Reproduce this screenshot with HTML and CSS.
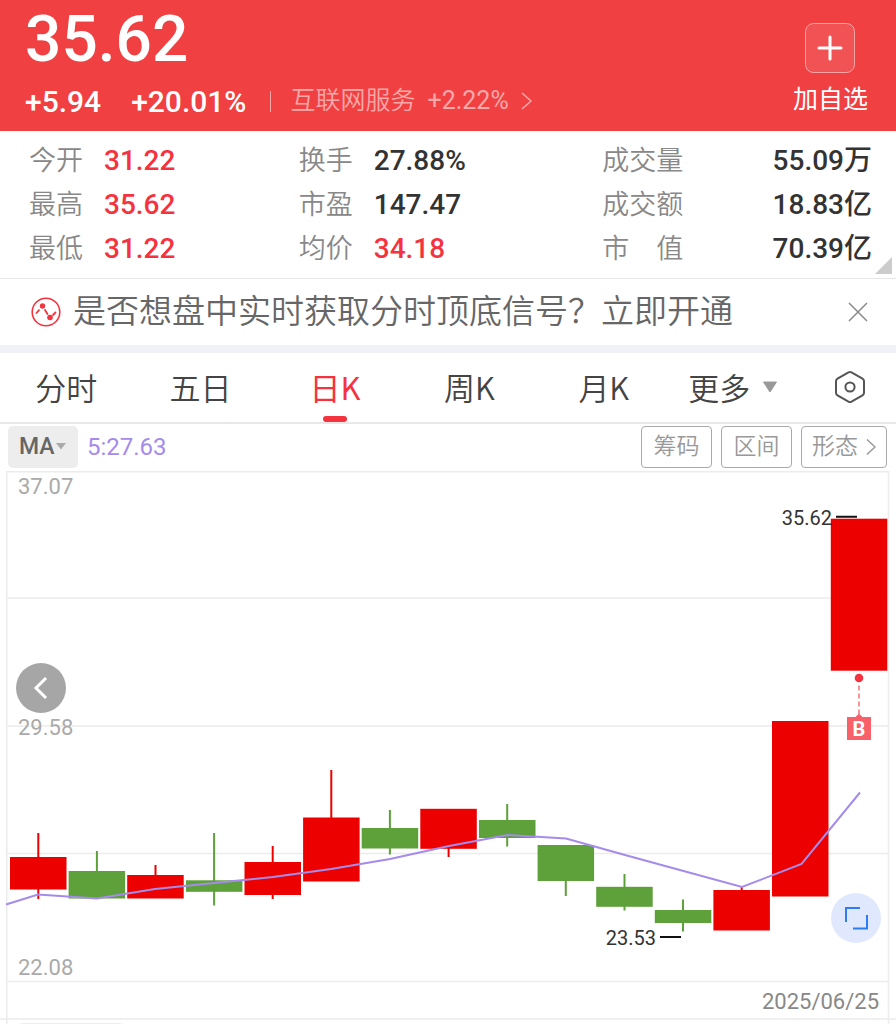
FILE: index.html
```html
<!DOCTYPE html>
<html lang="zh-CN">
<head>
    <meta charset="UTF-8">
    <meta name="viewport" content="width=device-width, initial-scale=1.0">
    <title>日K</title>
    <link rel="stylesheet" href="styles.css">
</head>
<body>
    <header class="quote">
        <div class="quote-main">
            <div class="price">35.62</div>
            <div class="quote-row">
                <span class="change">+5.94</span>
                <span class="change">+20.01%</span>
                <a class="sector" href="#">
                    <span>互联网服务</span>
                    <span class="sector-change">+2.22%</span>
                    <svg width="12" height="20" viewBox="0 0 12 20"><path d="M1 2l9 8-9 8" fill="none" stroke="currentColor" stroke-width="1.5"/></svg>
                </a>
            </div>
        </div>
        <button class="add-btn" type="button">
            <svg class="add-icon" width="50" height="50" viewBox="0 0 50 50">
                <rect x="0.5" y="0.5" width="49" height="49" rx="8" fill="#fff" fill-opacity=".1" stroke="#fff" stroke-opacity=".5"/>
                <path d="M14 25h22M25 14v22" stroke="#fff" stroke-width="3" stroke-linecap="round"/>
            </svg>
            <span>加自选</span>
        </button>
    </header>

    <section class="stats">
        <dl class="stats-col">
            <div class="stat"><dt>今开</dt><dd class="up">31.22</dd></div>
            <div class="stat"><dt>最高</dt><dd class="up">35.62</dd></div>
            <div class="stat"><dt>最低</dt><dd class="up">31.22</dd></div>
        </dl>
        <dl class="stats-col">
            <div class="stat"><dt>换手</dt><dd>27.88%</dd></div>
            <div class="stat"><dt>市盈</dt><dd>147.47</dd></div>
            <div class="stat"><dt>均价</dt><dd class="up">34.18</dd></div>
        </dl>
        <dl class="stats-col stats-last">
            <div class="stat"><dt>成交量</dt><dd>55.09万</dd></div>
            <div class="stat"><dt>成交额</dt><dd>18.83亿</dd></div>
            <div class="stat"><dt>市　值</dt><dd>70.39亿</dd></div>
        </dl>
        <span class="corner"></span>
    </section>

    <section class="notice">
        <svg width="30" height="30" viewBox="0 0 30 30" fill="none" stroke="#f5333f">
            <circle cx="15" cy="15" r="13.8" stroke-width="1.6"/>
            <path d="M5.5 16l2.5-2.800M14 13l2.500 4M22 18l2.500-2.500" stroke-width="1.8" stroke-linecap="round"/>
            <circle cx="11.500" cy="9" r="2.7" fill="#f5333f" stroke="none"/>
            <circle cx="19" cy="20.500" r="2.8" fill="#f5333f" stroke="none"/>
        </svg>
        <a class="notice-text" href="#">是否想盘中实时获取分时顶底信号？立即开通</a>
        <button class="close-btn" type="button" aria-label="关闭">
            <svg width="20" height="20" viewBox="0 0 20 20"><path d="M1 1l18 18M19 1L1 19" stroke="#888" stroke-width="1.5"/></svg>
        </button>
    </section>

    <nav class="tabs">
        <button class="tab" type="button">分时</button>
        <button class="tab" type="button">五日</button>
        <button class="tab active" type="button">日K</button>
        <button class="tab" type="button">周K</button>
        <button class="tab" type="button">月K</button>
        <button class="tab tab-more" type="button">更多
            <svg width="16" height="12" viewBox="0 0 16 12"><path d="M1.500 1h13L8 11z" fill="#999" stroke="#999" stroke-linejoin="round"/></svg>
        </button>
        <button class="tab" type="button" aria-label="设置">
            <svg width="32" height="34" viewBox="0 0 32 34" fill="none" stroke="#555" stroke-width="2">
                <path d="M14.500 2.400q1.500-.8 3 0l11 6.300q1.500.9 1.500 2.600v11.400q0 1.700-1.500 2.600l-11 6.300q-1.500.8-3 0l-11-6.300q-1.500-.9-1.500-2.600V11.300q0-1.700 1.500-2.600z"/>
                <circle cx="16" cy="17" r="4.600"/>
            </svg>
        </button>
    </nav>

    <div class="toolbar">
        <div class="indicator">
            <select class="indicator-select" aria-label="指标">
                <option>MA</option>
                <option>BOLL</option>
            </select>
            <svg class="indicator-arrow" width="10" height="7" viewBox="0 0 10 7"><path d="M0 0h10L5 6.500z" fill="#aaa"/></svg>
        </div>
        <span class="ma-value">5:27.63</span>
        <button class="tool-btn" type="button">筹码</button>
        <button class="tool-btn" type="button">区间</button>
        <button class="tool-btn tool-wide" type="button">形态
            <svg width="10" height="18" viewBox="0 0 10 18"><path d="M1 1.500L9 9l-8 7.500" fill="none" stroke="#999" stroke-width="1.500"/></svg>
        </button>
    </div>

    <main class="chart">
        <svg class="kline" viewBox="0 471 896 553">
            <!-- grid -->
            <g stroke="#ececec" stroke-width="1.500" fill="none">
                <path d="M6 471.750H889M7 598H888M7 726H888M7 853.500H888M7 981.500H888M0 1019H896"/>
                <path d="M6.750 471V1024M888.500 471V1024"/>
            </g>
            <rect x="19" y="1023" width="104" height="8" rx="4" fill="#eee"/>

            <g class="axis">
                <text x="18" y="494">37.07</text>
                <text x="18" y="735">29.58</text>
                <text x="18" y="975">22.08</text>
            </g>
            <text class="date" x="879" y="1009" text-anchor="end">2025/06/25</text>

            <!-- candles -->
            <g fill="#ed0000" stroke="#ed0000" stroke-width="2">
                <path d="M38.300 833V899M155.500 865V898M272.700 846V899M331.300 770V880M448.600 810V857M741.700 887V930"/>
                <g stroke="none">
                    <rect x="10" y="857" width="56.500" height="32.500"/>
                    <rect x="127.200" y="875" width="56.500" height="23.500"/>
                    <rect x="244.500" y="862" width="56.500" height="33"/>
                    <rect x="303.100" y="817.500" width="56.500" height="64"/>
                    <rect x="420.300" y="808.800" width="56.500" height="40"/>
                    <rect x="713.400" y="890" width="56.500" height="40.500"/>
                    <rect x="772" y="721" width="56.500" height="175.500"/>
                    <rect x="830.800" y="518.700" width="56.500" height="152"/>
                </g>
            </g>
            <g fill="#5ea03a" stroke="#5ea03a" stroke-width="2">
                <path d="M96.900 851V897M214.100 833V905.500M389.900 810V854.500M507.200 804V846.500M565.800 846V896M624.500 874V910.500M683 899.500V931.500"/>
                <g stroke="none">
                    <rect x="68.600" y="871" width="56.500" height="27.500"/>
                    <rect x="185.900" y="880.300" width="56.500" height="11.500"/>
                    <rect x="361.700" y="828" width="56.500" height="20.500"/>
                    <rect x="479" y="820" width="56.500" height="18"/>
                    <rect x="537.600" y="845" width="56.500" height="36"/>
                    <rect x="596.200" y="886.800" width="56.500" height="20"/>
                    <rect x="654.800" y="910" width="56.500" height="13"/>
                </g>
            </g>

            <!-- MA5 -->
            <polyline fill="none" stroke="#a48bec" stroke-width="2" points="6,904.500 38,894.500 97,898.500 155,889 214,883 273,877 331,869 390,859 449,846 507.500,835 566,838.500 625,855 683.500,871 742,887 801.500,864 860,792.500"/>

            <!-- high / low marks -->
            <path d="M836 516.800H857M660 937H681" stroke="#111" stroke-width="2"/>
            <text class="mark" x="832" y="525" text-anchor="end">35.62</text>
            <text class="mark" x="656" y="945" text-anchor="end">23.53</text>

            <!-- buy point -->
            <circle cx="859" cy="678" r="4.300" fill="#f5333f"/>
            <path d="M859 685.500V714" stroke="#f58a90" stroke-width="1.800" stroke-dasharray="5 3"/>
            <path d="M847 717h8.500l3.500-3.500 3.500 3.500h8.500v23h-24z" fill="#f8606a"/>
            <text class="buy" x="859" y="736" text-anchor="middle">B</text>
        </svg>
        <button class="float-btn prev-btn" type="button" aria-label="向前">
            <svg width="50" height="50" viewBox="0 0 50 50"><path d="M30 15L20 25l10 10" fill="none" stroke="#fff" stroke-width="3"/></svg>
        </button>
        <button class="float-btn full-btn" type="button" aria-label="全屏">
            <svg width="50" height="50" viewBox="0 0 50 50"><path d="M15 29V15h14M22 35.500h14V22" fill="none" stroke="#2f7bf6" stroke-width="2"/></svg>
        </button>
    </main>
</body>
</html>
```

FILE: styles.css
```css
* {
    box-sizing: border-box;
}

body {
    margin: 0;
    background: #fff;
    color: #333;
    font-family: Roboto, "Noto Sans CJK SC", sans-serif;
}

button {
    padding: 0;
    border: 0;
    background: none;
    color: inherit;
    font-family: inherit;
    cursor: pointer;
}

a {
    color: inherit;
    text-decoration: none;
}

svg {
    display: block;
}

dl, dd {
    margin: 0;
}

/* header */
.quote {
    display: flex;
    justify-content: space-between;
    padding: 8px 28px 12px 25px;
    background: #f04042;
    color: #fff;
}

.price {
    font-size: 64px;
    font-weight: 500;
    line-height: 64px;
}

.quote-row {
    display: flex;
    align-items: center;
    margin-top: 11px;
    height: 36px;
}

.change {
    margin-right: 30px;
    font-size: 30px;
    font-weight: 500;
}

.change + .change {
    margin-right: 24px;
}

.sector {
    display: flex;
    align-items: center;
    gap: 12px;
    color: #f9a9aa;
    font-size: 25px;
    font-weight: 350;
    line-height: 36px;
}

.sector::before {
    content: "";
    width: 1px;
    height: 21px;
    margin-right: 7px;
    background: #f9a9aa;
}

.sector-change {
    font-weight: 400;
}

.add-btn {
    display: flex;
    flex-direction: column;
    align-items: center;
    padding-top: 15px;
    font-size: 25px;
    line-height: 36px;
    gap: 9px;
}

/* stats */
.stats {
    position: relative;
    display: grid;
    grid-template-columns: 16fr 18fr 16fr;
    padding: 8px 24px 7px 29px;
    border-bottom: 1px solid #e6e6e6;
}

.stat {
    display: flex;
    height: 44px;
    font-size: 28px;
    line-height: 44px;
}

.stat dt {
    width: 75px;
    color: #888;
    font-size: 27px;
    font-weight: 350;
}

.stat dd {
    font-weight: 500;
}

.stats-last .stat {
    justify-content: space-between;
}

.stats-last dt {
    width: auto;
}

.up {
    color: #f5333f;
}

.corner {
    position: absolute;
    right: 4px;
    bottom: 4px;
    border-left: 17px solid transparent;
    border-bottom: 17px solid #ccc;
}

/* notice */
.notice {
    display: flex;
    align-items: center;
    gap: 12px;
    height: 74px;
    padding: 0 28px 0 31px;
    border-bottom: 8px solid #f1f2f7;
}

.notice-text {
    flex: 1;
    color: #666;
    font-size: 33px;
    font-weight: 350;
    line-height: 66px;
    height: 66px;
    white-space: nowrap;
}

/* tabs */
.tabs {
    display: grid;
    grid-template-columns: repeat(6, 3fr) 2fr;
    height: 71px;
    border-bottom: 2px solid #e8e8e8;
}

.tab {
    position: relative;
    display: flex;
    align-items: center;
    justify-content: center;
    padding: 0 2px 2px 0;
    color: #444;
    font-family: "Noto Sans CJK SC", sans-serif;
    font-size: 31px;
    font-weight: 350;
}

.tab-more {
    gap: 12px;
    padding-right: 12px;
}

.tab.active {
    color: #f5333f;
    font-weight: 400;
}

.tab.active::after {
    content: "";
    position: absolute;
    bottom: 0;
    left: 50%;
    width: 24px;
    height: 6px;
    margin-left: -13px;
    border-radius: 3px;
    background: #f5333f;
}

/* toolbar */
.toolbar {
    display: flex;
    align-items: center;
    gap: 9px;
    height: 47px;
    padding: 0 9px 2px 8px;
}

.indicator {
    position: relative;
}

.indicator-select {
    appearance: none;
    display: block;
    width: 70px;
    height: 42px;
    padding: 0 0 0 11px;
    border: 0;
    border-radius: 5px;
    background: #ededed;
    color: #666;
    font-family: inherit;
    font-size: 23px;
    font-weight: 500;
}

.indicator-arrow {
    position: absolute;
    top: 17px;
    right: 12px;
    pointer-events: none;
}

.ma-value {
    margin-right: auto;
    color: #a48bec;
    font-size: 24px;
}

.tool-btn {
    display: flex;
    align-items: center;
    justify-content: center;
    gap: 8px;
    width: 71px;
    height: 42px;
    border: 1px solid #aaa;
    border-radius: 4px;
    color: #999;
    font-size: 23px;
    font-weight: 350;
    line-height: 40px;
}

.tool-wide {
    width: 86px;
}

/* chart */
.chart {
    position: relative;
}

.kline {
    width: 100%;
    height: auto;
}

.axis {
    fill: #aaa;
    font-size: 22px;
}

.date {
    fill: #888;
    font-size: 22px;
}

.mark {
    fill: #333;
    font-size: 20px;
}

.buy {
    fill: #fff;
    font-size: 20px;
    font-weight: 700;
}

.float-btn {
    position: absolute;
    border-radius: 50%;
}

.prev-btn {
    top: 192px;
    left: 16px;
    background: #a6a6a6;
}

.full-btn {
    right: 15px;
    bottom: 81px;
    background: #e0e8fd;
}
```
